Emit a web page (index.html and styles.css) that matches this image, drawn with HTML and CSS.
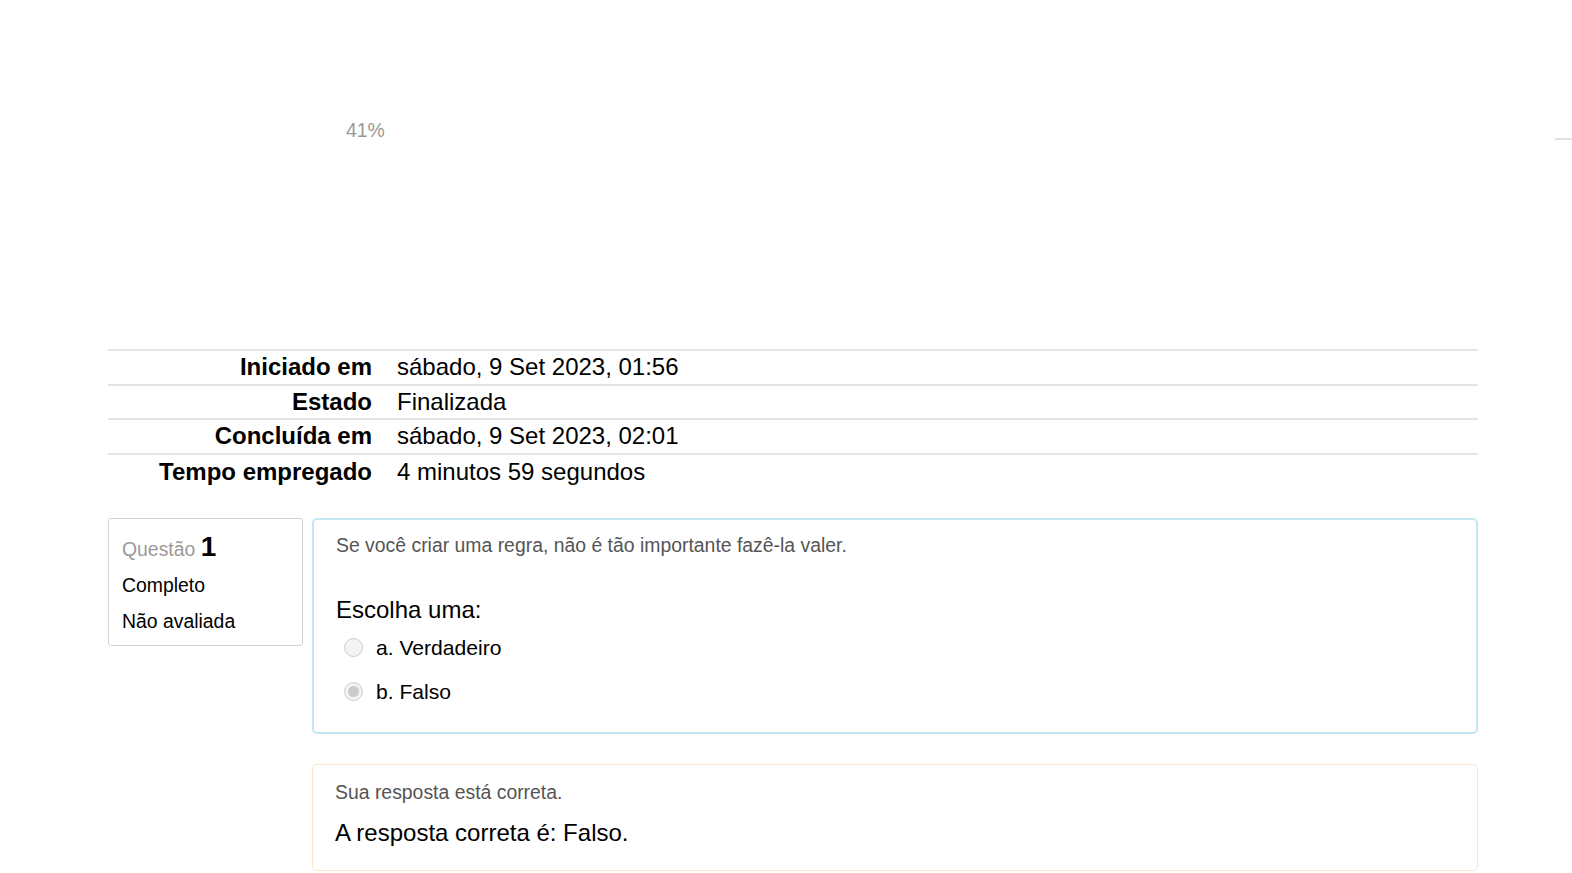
FILE: index.html
```html
<!DOCTYPE html>
<html lang="pt-BR">
<head>
<meta charset="utf-8">
<title>Revisão da tentativa</title>
<link rel="stylesheet" href="styles.css">
</head>
<body>
<div class="top">
  <div class="progress">41%</div>
  <div class="edge-line"></div>
</div>
<div class="page">
  <div class="summary">
    <div class="srow"><div class="slabel">Iniciado em</div><div class="svalue">sábado, 9 Set 2023, 01:56</div></div>
    <div class="srow"><div class="slabel">Estado</div><div class="svalue">Finalizada</div></div>
    <div class="srow"><div class="slabel">Concluída em</div><div class="svalue">sábado, 9 Set 2023, 02:01</div></div>
    <div class="srow"><div class="slabel">Tempo empregado</div><div class="svalue">4 minutos 59 segundos</div></div>
  </div>

  <div class="question">
    <div class="info">
      <div class="qno"><span class="qword">Questão</span> <span class="qnum">1</span></div>
      <div class="qstate">Completo</div>
      <div class="qgrade">Não avaliada</div>
    </div>
    <div class="main">
      <div class="formulation">
        <div class="qtext">Se você criar uma regra, não é tão importante fazê-la valer.</div>
        <div class="prompt">Escolha uma:</div>
        <div class="option"><span class="radio"></span><span class="olabel">a. Verdadeiro</span></div>
        <div class="option"><span class="radio checked"></span><span class="olabel">b. Falso</span></div>
      </div>
      <div class="feedback">
        <div class="fb-grade">Sua resposta está correta.</div>
        <div class="fb-right">A resposta correta é: Falso.</div>
      </div>
    </div>
  </div>
</div>
</body>
</html>
```
FILE: styles.css
```css
html, body {
  margin: 0;
  padding: 0;
  background: #fff;
}
body {
  font-family: "Liberation Sans", Arial, sans-serif;
  color: #000;
}
.top {
  height: 349px;
  display: flex;
  align-items: flex-start;
}
.progress {
  margin-left: 346px;
  margin-top: 118px;
  font-size: 19.4px;
  line-height: 24px;
  color: #999;
}
.edge-line {
  margin-left: auto;
  margin-top: 138px;
  width: 17px;
  height: 2px;
  background: #e2e2e2;
}
.page {
  margin-left: 108px;
  width: 1370px;
}
.summary {
  display: flex;
  flex-direction: column;
}
.srow {
  display: grid;
  grid-template-columns: 276px 1fr;
  border-top: 2px solid #e4e4e4;
  height: 32.5px;
  align-items: center;
  font-size: 24px;
}
.srow:last-child {
  height: 34px;
}
.slabel {
  font-weight: bold;
  text-align: right;
  padding-right: 12px;
}
.svalue {
  padding-left: 13px;
}
.question {
  margin-top: 29px;
  display: flex;
  gap: 9px;
  align-items: flex-start;
}
.info {
  width: 195px;
  box-sizing: border-box;
  border: 1.5px solid #d2d2d2;
  border-radius: 3px;
  padding: 8px 13px 6px 13px;
  font-size: 19.4px;
}
.qno {
  height: 40px;
  line-height: 44px;
}
.qword {
  color: #9a9a9a;
}
.qnum {
  font-size: 28px;
  line-height: 0;
  font-weight: bold;
  color: #000;
}
.qstate, .qgrade {
  height: 36px;
  line-height: 36px;
}
.main {
  flex: 1;
  display: flex;
  flex-direction: column;
  gap: 30px;
}
.formulation {
  border: 2px solid #c4e8f2;
  border-radius: 5px;
  padding: 11px 21px 18px 22px;
}
.qtext {
  font-size: 19.4px;
  line-height: 28px;
  color: #555;
}
.prompt {
  margin-top: 35px;
  font-size: 24px;
  line-height: 32px;
}
.option {
  display: flex;
  align-items: center;
  height: 44px;
}
.radio {
  width: 17px;
  height: 17px;
  border: 1.5px solid #cdcdcd;
  border-radius: 50%;
  background: #f3f3f3;
  margin-left: 8px;
  margin-right: 13px;
  position: relative;
  flex: none;
}
.radio.checked::after {
  content: "";
  position: absolute;
  left: 3px;
  top: 3px;
  width: 11px;
  height: 11px;
  border-radius: 50%;
  background: #cbcbcb;
}
.olabel {
  font-size: 21.1px;
}
.feedback {
  border: 1.5px solid #fbe6c8;
  border-radius: 5px;
  padding: 13px 21px 20px 22px;
}
.fb-grade {
  font-size: 19.4px;
  line-height: 28px;
  color: #555;
}
.fb-right {
  margin-top: 10px;
  font-size: 24px;
  line-height: 34px;
}
```
